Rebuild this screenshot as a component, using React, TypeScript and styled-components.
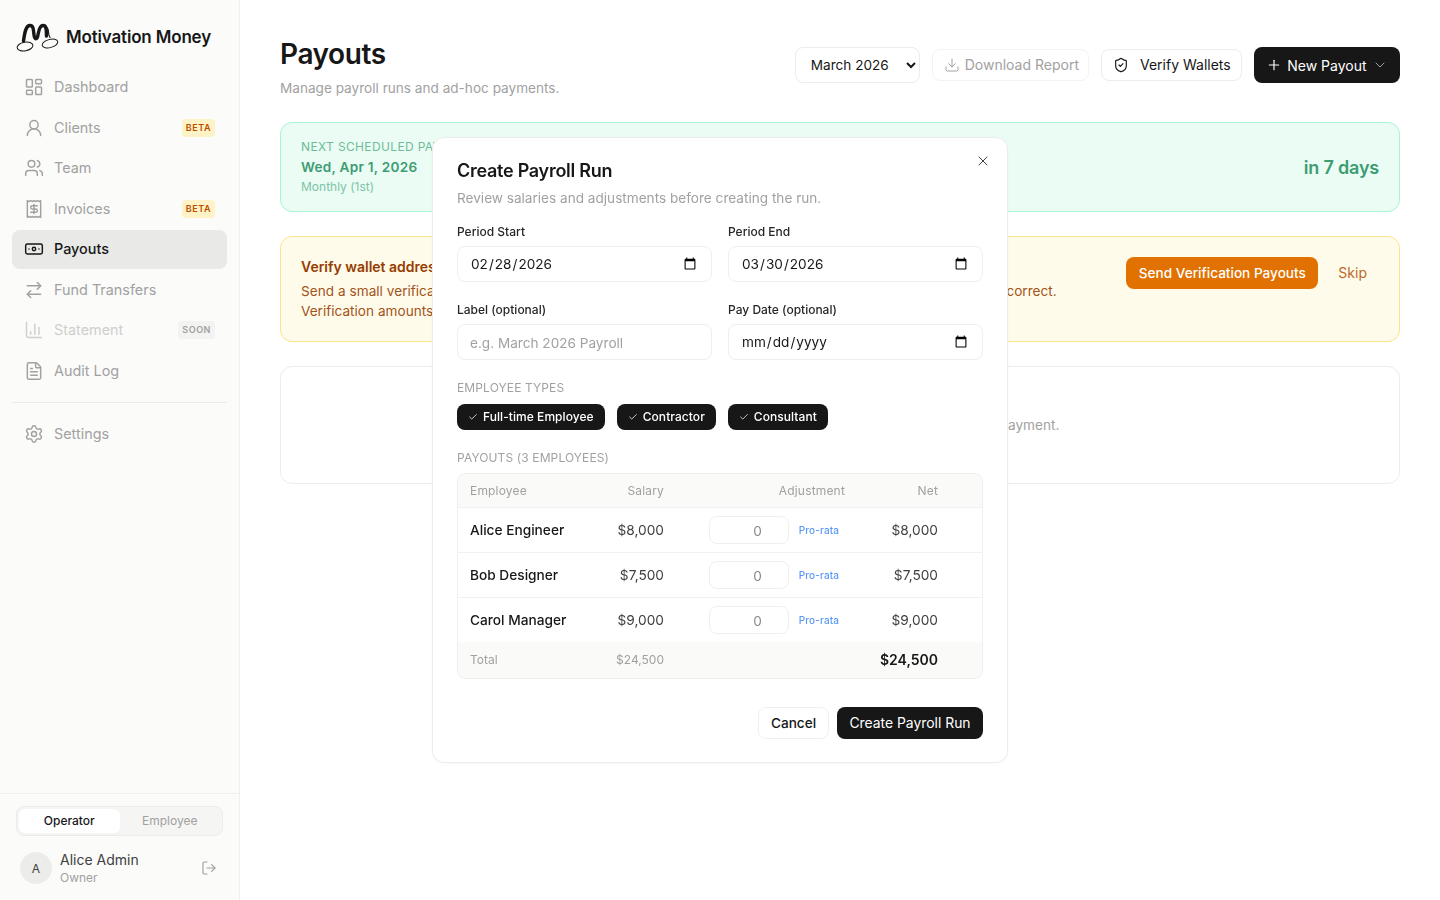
import React from "react";
import styled, { createGlobalStyle } from "styled-components";
import {
  LayoutDashboard, UserRound, Users, Receipt, Banknote, ArrowRightLeft, ChartColumn, FileText, Settings,
  LogOut, Download, ShieldCheck, Plus, ChevronDown, X, Check,
} from "lucide-react";

const Global = createGlobalStyle`
  html, body { margin: 0; padding: 0; background: #fff; }
  body { font-family: Inter, "Liberation Sans", sans-serif; color: #171717; -webkit-font-smoothing: antialiased; }
  * { box-sizing: border-box; }
`;

const Shell = styled.div`display: flex; height: 900px; overflow: hidden;`;

const Sidebar = styled.aside`
  width: 240px; flex: none; height: 100%; display: flex; flex-direction: column;
  background: #fbfbfa; border-right: 1px solid #efefed;
`;
const Brand = styled.div`
  display: flex; align-items: center; gap: 6px; height: 68px; padding: 6px 16px 0;
  font-size: 17px; font-weight: 600; letter-spacing: -0.01em; color: #171717;
`;
const Nav = styled.nav`display: flex; flex-direction: column; gap: 2px; padding: 0 12px; flex: 1;`;
const NavItem = styled.div<{ $active?: boolean; $dim?: boolean }>`
  display: flex; align-items: center; gap: 10px; height: 38.5px; padding: 0 12px; border-radius: 8px;
  font-size: 14.4px; line-height: 22.5px;
  color: ${(p) => (p.$active ? "#171717" : p.$dim ? "#cfcfcd" : "#a1a1a1")};
  background: ${(p) => (p.$active ? "#e9e9e7" : "transparent")};
  font-weight: ${(p) => (p.$active ? 500 : 400)};
  svg { flex: none; }
`;
const NavLabel = styled.span`flex: 1;`;
const Badge = styled.span<{ $soon?: boolean }>`
  font-size: 9px; line-height: 12px; font-weight: 600; letter-spacing: 0.06em; padding: 3px 4px; border-radius: 4px;
  background: ${(p) => (p.$soon ? "#f3f3f2" : "#fef3c6")};
  color: ${(p) => (p.$soon ? "#a1a1a1" : "#bb4d00")};
`;
const Rule = styled.div`height: 1px; background: #ecebe9; margin: 10px 0;`;
const Foot = styled.div`border-top: 1px solid #efefed; padding: 12px 16px 14px;`;
const RoleSwitch = styled.div`
  display: flex; height: 30px; padding: 2px; border: 1px solid #ececea; border-radius: 8px; background: #f5f5f4;
`;
const RoleTab = styled.div<{ $on?: boolean }>`
  flex: 1; display: flex; align-items: center; justify-content: center; border-radius: 6px; padding-bottom: 1px;
  font-size: 12px; font-weight: ${(p) => (p.$on ? 500 : 400)};
  color: ${(p) => (p.$on ? "#171717" : "#a1a1a1")};
  background: ${(p) => (p.$on ? "#fff" : "transparent")};
`;
const UserRow = styled.div`display: flex; align-items: center; gap: 8px; margin-top: 14px; padding: 0 6px 0 4px;`;
const Avatar = styled.div`
  width: 32px; height: 32px; border-radius: 50%; background: #ececea; display: flex; align-items: center;
  justify-content: center; font-size: 12px; font-weight: 400; color: #404040;
`;
const UserText = styled.div`flex: 1;`;
const UserName = styled.div`font-size: 14px; line-height: 20px; color: #404040;`;
const UserRole = styled.div`font-size: 12px; line-height: 16px; color: #a1a1a1;`;

const Main = styled.main`flex: 1; padding: 36px 40px 0; min-width: 0;`;
const Header = styled.header`display: flex; justify-content: space-between; align-items: flex-start; margin-bottom: 24px;`;
const Title = styled.h1`margin: 0 0 6px; font-size: 28px; line-height: 36px; font-weight: 600; letter-spacing: -0.015em;`;
const Sub = styled.p`margin: 0; font-size: 13.6px; line-height: 20px; color: #a1a1a1;`;
const Actions = styled.div`display: flex; align-items: center; gap: 12px; margin-top: 11px;`;
const MonthSelect = styled.select`
  width: 125px; height: 36px; padding: 0 8px 0 11px; border: 1px solid #ececea; border-radius: 8px; background: #fff;
  font: 400 13.6px Inter, sans-serif; color: #171717;
`;
const GhostBtn = styled.button<{ $off?: boolean; $gap?: number; $pr?: number }>`
  display: inline-flex; align-items: center; gap: ${(p) => p.$gap ?? 5}px; height: 32px; padding: 0 ${(p) => p.$pr ?? 9}px 1px 11px; background: #fff;
  border: 1px solid ${(p) => (p.$off ? "#f3f3f2" : "#ececea")}; border-radius: 8px;
  font: 400 14px Inter, sans-serif; color: ${(p) => (p.$off ? "#a1a1a1" : "#171717")};
`;
const DarkBtn = styled.button`
  display: inline-flex; align-items: center; gap: 5.5px; height: 36px; padding: 0 12px; background: #171717; border: 0;
  border-radius: 8px; font: 400 14px Inter, sans-serif; color: #fff;
`;

const Card = styled.section`border-radius: 12px; margin-bottom: 24px; border: 1px solid #ececea; background: #fff;`;
const NextCard = styled(Card)`
  height: 90px; padding: 16px 20px; display: flex; justify-content: space-between; align-items: center;
  background: #ebfcf4; border-color: #a8f3d1;
`;
const NextLabel = styled.div`font-size: 12px; line-height: 16px; letter-spacing: 0.03em; text-transform: uppercase; color: #6dbd99;`;
const NextDate = styled.div`font-size: 13.6px; line-height: 24px; font-weight: 600; letter-spacing: 0.02em; color: #3d9c73;`;
const NextMeta = styled.div`font-size: 12px; line-height: 16px; color: #7cc4a4;`;
const Countdown = styled.div`font-size: 18px; font-weight: 600; color: #3d9c73; letter-spacing: -0.01em;`;
const VerifyCard = styled(Card)`
  padding: 20px; display: flex; justify-content: space-between; align-items: flex-start;
  background: #fffbeb; border-color: #fde68a;
`;
const VerifyTitle = styled.div`font-size: 14px; line-height: 20px; font-weight: 600; color: #973c00; margin-bottom: 4px;`;
const VerifyText = styled.div`font-size: 13.6px; line-height: 20px; word-spacing: 0.15px; color: #a2531a;`;
const VerifyActions = styled.div`display: flex; gap: 8px; flex: none;`;
const OrangeBtn = styled.button`
  height: 32px; width: 192px; padding: 0; border: 0; border-radius: 8px; background: #e17100; color: #fff;
  font: 500 13.6px Inter, sans-serif;
`;
const SkipBtn = styled.button`
  height: 32px; padding: 0 12px 1px; border: 0; background: transparent; color: #bb6a2a; font: 400 14px Inter, sans-serif;
`;
const EmptyCard = styled(Card)`padding: 48px 24px; text-align: center; font-size: 13.6px; line-height: 20px; color: #a1a1a1;`;

const Modal = styled.div`
  position: fixed; top: 137px; left: 432px; width: 576px; padding: 24px 24px 23px; background: #fff;
  border: 1px solid #ececea; border-radius: 12px; box-shadow: 0 1px 3px rgba(0,0,0,.03);
`;
const CloseBtn = styled.button`
  position: absolute; top: 15px; right: 16px; padding: 0; width: 16px; height: 16px; border: 0; background: none; color: #404040;
  display: flex; align-items: center; justify-content: center;
`;
const ModalTitle = styled.h2`margin: 0 0 8px; font-size: 18px; line-height: 18px; font-weight: 600; letter-spacing: -0.015em;`;
const ModalSub = styled.p`margin: 0 0 16px; font-size: 13.6px; line-height: 20px; color: #a1a1a1;`;
const FormGrid = styled.div`display: grid; grid-template-columns: 1fr 1fr; column-gap: 16px; row-gap: 20px; margin-bottom: 20px;`;
const Field = styled.label`display: flex; flex-direction: column; gap: 6px; font-size: 12px; line-height: 16px; font-weight: 500; color: #262626;`;
const TextInput = styled.input`
  width: 100%; height: 36px; padding: 0 12px; border: 1px solid #efefed; border-radius: 8px; background: #fff;
  font: 400 13.6px Inter, sans-serif; color: #171717;
  &::placeholder { color: #a1a1a1; }
  &:not([type="date"]) { padding-top: 2px; }
`;
const SectionLabel = styled.div<{ $mb: number }>`
  font-size: 12px; line-height: 16px; letter-spacing: 0.01em; text-transform: uppercase; color: #a1a1a1; margin-bottom: ${(p) => p.$mb}px;
`;
const Chips = styled.div`display: flex; gap: 12px; margin-bottom: 20px;`;
const Chip = styled.div`
  display: inline-flex; align-items: center; gap: 5px; height: 26px; padding: 0 11px 1px; border-radius: 8px; background: #171717; color: #fff;
  font-size: 12px; font-weight: 500; letter-spacing: 0.005em;
`;
const TableWrap = styled.div`border: 1px solid #efefed; border-radius: 8px; overflow: hidden; margin-bottom: 28px;`;
const Table = styled.table`width: 100%; border-collapse: separate; border-spacing: 0; table-layout: fixed;`;
const Th = styled.th<{ $w?: number; $left?: boolean }>`
  ${(p) => (p.$w ? `width: ${p.$w}px;` : "")}
  height: 34px; padding: 0 12px; background: #fafaf9; border-bottom: 1px solid #f1f1ef;
  font-size: 12px; font-weight: 400; letter-spacing: 0.015em; color: #a1a1a1; text-align: ${(p) => (p.$left ? "left" : "right")};
`;
const Td = styled.td<{ $left?: boolean; $last?: boolean; $tone?: string; $weight?: number }>`
  height: ${(p) => (p.$last ? 44 : 45)}px; padding: 0 12px; font-size: 13.7px; border-bottom: ${(p) => (p.$last ? "0" : "1px solid #f1f1ef")};
  text-align: ${(p) => (p.$left ? "left" : "right")}; color: ${(p) => p.$tone ?? "#404040"}; font-weight: ${(p) => p.$weight ?? 400};
`;
const TotalTd = styled.td<{ $left?: boolean; $strong?: boolean }>`
  height: 36px; padding: 0 12px 1px; background: #fafaf9; text-align: ${(p) => (p.$left ? "left" : "right")};
  font-size: ${(p) => (p.$strong ? 14 : 12)}px; font-weight: ${(p) => (p.$strong ? 600 : 400)};
  color: ${(p) => (p.$strong ? "#171717" : "#a1a1a1")};
`;
const AdjustCell = styled.div`display: flex; align-items: center; justify-content: flex-end; gap: 10px; padding-right: 6px;`;
const AdjustInput = styled.input`
  width: 80px; height: 28px; padding: 2px 11px 0 12px; border: 1px solid #efefed; border-radius: 8px; background: #fff; text-align: right;
  font: 400 13.6px Inter, sans-serif; color: #8a8a8a;
`;
const ProRata = styled.span`font-size: 10px; font-weight: 500; color: #5b98f5; letter-spacing: 0.01em;`;
const Footer = styled.div`display: flex; justify-content: flex-end; gap: 8px;`;
const CancelBtn = styled.button`
  height: 32px; width: 71px; padding: 0; background: #fff; border: 1px solid #efefed; border-radius: 8px; font: 500 13.6px Inter, sans-serif; color: #171717;
`;
const SubmitBtn = styled.button`
  height: 32px; width: 146px; padding: 0 0 1px; background: #171717; border: 0; border-radius: 8px; font: 400 13.9px Inter, sans-serif; color: #fff;
`;

const Logo = () => (
  <svg width="44" height="30" viewBox="0 0 44 30" fill="none" stroke="#171717" strokeLinecap="round" strokeLinejoin="round">
    <path d="M7.500 19C8.500 12 9.500 4 13.500 3.500c4-.5 4 4.500 4.500 9.500.3 3 2 5.500 3.500 2 1-3 1-11.500 5.500-11.500s3 6.500 3.500 10.500" strokeWidth="3.400" />
    <path d="M30 5c2 .5 2.500 3 2.500 5.500.1 2.500.5 3.500 1.500 5" strokeWidth="1.200" />
    <ellipse cx="9" cy="24.500" rx="8" ry="4.300" strokeWidth="1" transform="rotate(-10 9 24.500)" />
    <ellipse cx="34" cy="21.500" rx="8" ry="4" strokeWidth="1" transform="rotate(-15 34 21.500)" />
  </svg>
);

const navTop = [
  { icon: LayoutDashboard, label: "Dashboard" },
  { icon: UserRound, label: "Clients", badge: "BETA" },
  { icon: Users, label: "Team" },
  { icon: Receipt, label: "Invoices", badge: "BETA" },
  { icon: Banknote, label: "Payouts", active: true },
  { icon: ArrowRightLeft, label: "Fund Transfers" },
  { icon: ChartColumn, label: "Statement", badge: "SOON", dim: true },
  { icon: FileText, label: "Audit Log" },
];

const employees = [
  { name: "Alice Engineer", pay: "$8,000" },
  { name: "Bob Designer", pay: "$7,500" },
  { name: "Carol Manager", pay: "$9,000" },
];

export default function App() {
  return (
    <Shell>
      <Global />
      <Sidebar>
        <Brand><Logo />Motivation Money</Brand>
        <Nav>
          {navTop.map((n) => (
            <NavItem key={n.label} $active={n.active} $dim={n.dim}>
              <n.icon size={20} strokeWidth={1.75} />
              <NavLabel>{n.label}</NavLabel>
              {n.badge && <Badge $soon={n.badge === "SOON"}>{n.badge}</Badge>}
            </NavItem>
          ))}
          <Rule />
          <NavItem><Settings size={20} strokeWidth={1.75} /><NavLabel>Settings</NavLabel></NavItem>
        </Nav>
        <Foot>
          <RoleSwitch>
            <RoleTab $on>Operator</RoleTab>
            <RoleTab>Employee</RoleTab>
          </RoleSwitch>
          <UserRow>
            <Avatar>A</Avatar>
            <UserText>
              <UserName>Alice Admin</UserName>
              <UserRole>Owner</UserRole>
            </UserText>
            <LogOut size={16} strokeWidth={1.75} color="#a1a1a1" />
          </UserRow>
        </Foot>
      </Sidebar>
      <Main>
        <Header>
          <div>
            <Title>Payouts</Title>
            <Sub>Manage payroll runs and ad-hoc payments.</Sub>
          </div>
          <Actions>
            <MonthSelect defaultValue="March 2026">
              <option>March 2026</option>
              <option>February 2026</option>
            </MonthSelect>
            <GhostBtn $off disabled><Download size={16} strokeWidth={1.5} />Download Report</GhostBtn>
            <GhostBtn $gap={11} $pr={10}><ShieldCheck size={16} strokeWidth={1.75} />Verify Wallets</GhostBtn>
            <DarkBtn><Plus size={16} strokeWidth={1.75} />New Payout<ChevronDown size={16} strokeWidth={1.5} color="#a1a1a1" /></DarkBtn>
          </Actions>
        </Header>
        <NextCard>
          <div>
            <NextLabel>Next scheduled payroll</NextLabel>
            <NextDate>Wed, Apr 1, 2026</NextDate>
            <NextMeta>Monthly (1st)</NextMeta>
          </div>
          <Countdown>in 7 days</Countdown>
        </NextCard>
        <VerifyCard>
          <div>
            <VerifyTitle>Verify wallet addresses</VerifyTitle>
            <VerifyText>
              Send a small verification payout to each team member's wallet so they can verify that their payout address is correct.<br />
              Verification amounts are deducted from the next payroll.
            </VerifyText>
          </div>
          <VerifyActions>
            <OrangeBtn>Send Verification Payouts</OrangeBtn>
            <SkipBtn>Skip</SkipBtn>
          </VerifyActions>
        </VerifyCard>
        <EmptyCard>No payouts yet. Create a payroll run or send a new ad-hoc payment.</EmptyCard>
      </Main>
      <Modal role="dialog">
        <CloseBtn aria-label="Close"><X size={16} strokeWidth={1.5} /></CloseBtn>
        <ModalTitle>Create Payroll Run</ModalTitle>
        <ModalSub>Review salaries and adjustments before creating the run.</ModalSub>
        <FormGrid>
          <Field>Period Start<TextInput type="date" defaultValue="2026-02-28" /></Field>
          <Field>Period End<TextInput type="date" defaultValue="2026-03-30" /></Field>
          <Field>Label (optional)<TextInput placeholder="e.g. March 2026 Payroll" /></Field>
          <Field>Pay Date (optional)<TextInput type="date" /></Field>
        </FormGrid>
        <SectionLabel $mb={8}>Employee types</SectionLabel>
        <Chips>
          {["Full-time Employee", "Contractor", "Consultant"].map((c) => (
            <Chip key={c}><Check size={10} strokeWidth={1.8} />{c}</Chip>
          ))}
        </Chips>
        <SectionLabel $mb={7}>Payouts (3 employees)</SectionLabel>
        <TableWrap>
          <Table>
            <thead>
              <tr>
                <Th $left $w={132}>Employee</Th>
                <Th $w={86}>Salary</Th>
                <Th $w={181}>Adjustment</Th>
                <Th $w={93}>Net</Th>
                <Th />
              </tr>
            </thead>
            <tbody>
              {employees.map((e, i) => {
                const last = i === employees.length - 1;
                return (
                  <tr key={e.name}>
                    <Td $left $last={last} $tone="#171717" $weight={500}>{e.name}</Td>
                    <Td $last={last}>{e.pay}</Td>
                    <Td $last={last}>
                      <AdjustCell>
                        <AdjustInput type="number" defaultValue={0} />
                        <ProRata>Pro-rata</ProRata>
                      </AdjustCell>
                    </Td>
                    <Td $last={last}>{e.pay}</Td>
                    <Td $last={last} />
                  </tr>
                );
              })}
              <tr>
                <TotalTd $left>Total</TotalTd>
                <TotalTd>$24,500</TotalTd>
                <TotalTd />
                <TotalTd $strong>$24,500</TotalTd>
                <TotalTd />
              </tr>
            </tbody>
          </Table>
        </TableWrap>
        <Footer>
          <CancelBtn>Cancel</CancelBtn>
          <SubmitBtn>Create Payroll Run</SubmitBtn>
        </Footer>
      </Modal>
    </Shell>
  );
}
